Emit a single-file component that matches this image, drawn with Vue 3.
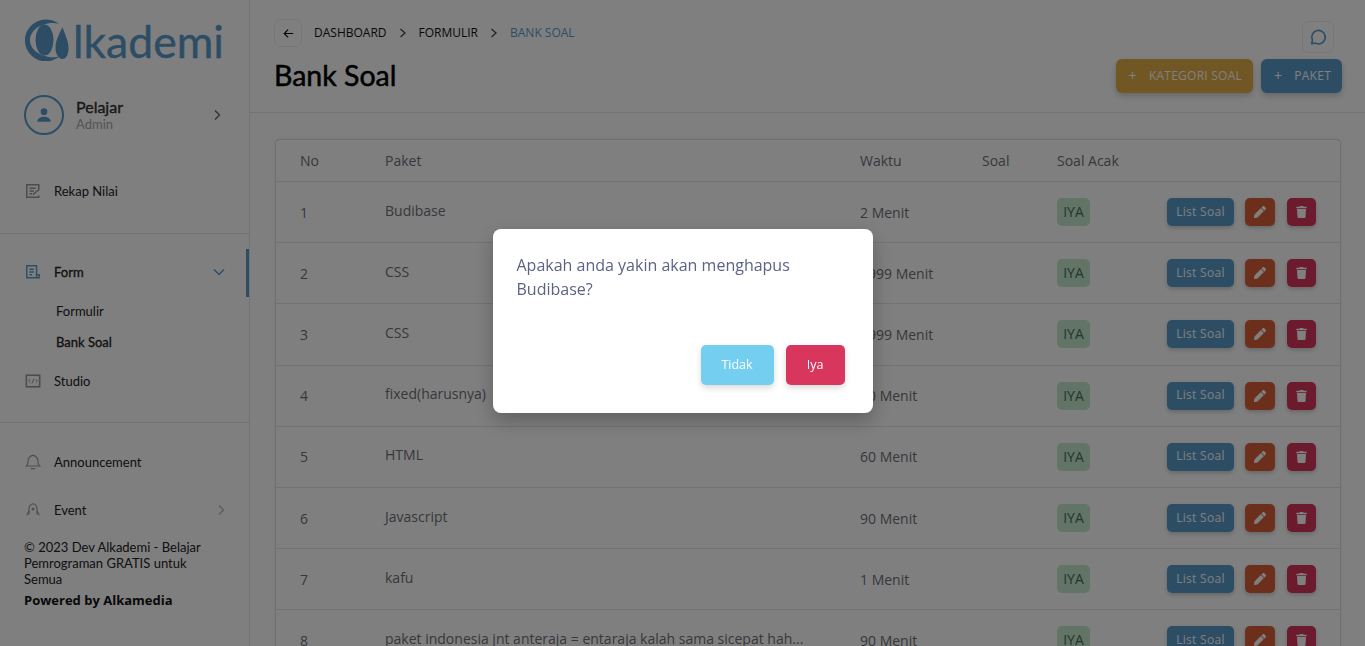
<script setup>
const rows = [
  { no: 1, paket: 'Budibase', waktu: '2 Menit' },
  { no: 2, paket: 'CSS', waktu: '9999 Menit' },
  { no: 3, paket: 'CSS', waktu: '9999 Menit' },
  { no: 4, paket: 'fixed(harusnya)', waktu: '60 Menit' },
  { no: 5, paket: 'HTML', waktu: '60 Menit' },
  { no: 6, paket: 'Javascript', waktu: '90 Menit' },
  { no: 7, paket: 'kafu', waktu: '1 Menit' },
  { no: 8, paket: 'paket indonesia jnt anteraja = entaraja kalah sama sicepat hah...', waktu: '90 Menit' }
]
</script>

<template>
  <div class="page">
    <aside class="sidebar">
      <div class="logo">
        <svg class="logo-mark" viewBox="0 0 46 42" width="46" height="42">
          <path d="M35 5A21 21 0 1 0 36 37C26 41 6 35 6 21C6 8 25 1 35 5Z" fill="#5a9bcb" />
          <ellipse cx="20.500" cy="21" rx="9" ry="15.500" fill="#5a9bcb" />
          <path d="M40 7C37 14 33 20 33 28C33 34 36 39 40 39C44 39 46 34 46 28C46 20 42 14 40 7Z" fill="#5a9bcb" transform="translate(-1.500 1)" />
        </svg>
        <span class="logo-text">lkademi</span>
      </div>

      <div class="user">
        <div class="avatar">
          <svg viewBox="0 0 24 24" width="20" height="20"><circle cx="12" cy="8" r="4" fill="#5a9bcb" /><path d="M4 20c0-4 4-6 8-6s8 2 8 6z" fill="#5a9bcb" /></svg>
        </div>
        <div class="user-info">
          <div class="user-name">Pelajar</div>
          <div class="user-role">Admin</div>
        </div>
        <svg class="chev" viewBox="0 0 12 12" width="12" height="12"><path d="M4 1.500 8.500 6 4 10.500" fill="none" stroke="#666" stroke-width="1.400" /></svg>
      </div>

      <div class="nav-item first">
        <svg viewBox="0 0 18 18" width="16" height="16" fill="none" stroke="#999" stroke-width="1.700"><path d="M15.500 7V2H2v14h13.500v-2" /><path d="M5 6h7M5 9h5M5 12h3" /><path d="m9 13 7-6" /></svg>
        <span>Rekap Nilai</span>
      </div>
      <div class="divider"></div>
      <div class="nav-item active">
        <svg viewBox="0 0 18 18" width="16" height="16" fill="none" stroke="#5a9bcb" stroke-width="1.600"><path d="M13 15V2H2v13.500h14V12h-3" /><path d="M5 6h5M5 9h5M5 12h3" /></svg>
        <span class="strong">Form</span>
        <svg class="chev down" viewBox="0 0 12 12" width="12" height="12"><path d="M1 3.500 6 8.500 11 3.500" fill="none" stroke="#5a9bcb" stroke-width="1.500" /></svg>
      </div>
      <div class="sub-item">Formulir</div>
      <div class="sub-item strong">Bank Soal</div>
      <div class="nav-item studio">
        <svg viewBox="0 0 18 18" width="16" height="16" fill="none" stroke="#999" stroke-width="1.800"><rect x="1.500" y="2.500" width="15" height="13" /><path d="M6 7 4 9l2 2M12 7l2 2-2 2M10 6.500l-2 5" stroke-width="1.100" /></svg>
        <span>Studio</span>
      </div>
      <div class="divider second"></div>
      <div class="nav-item">
        <svg viewBox="0 0 18 18" width="16" height="16" fill="none" stroke="#999" stroke-width="1.300"><path d="M1.500 13.500h15c-1.500-1-2-2-2-5.500s-2.500-6.500-5.500-6.500-5.500 3-5.500 6.500-.5 4.500-2 5.500Z" /><path d="M6.500 16.500h5" /></svg>
        <span>Announcement</span>
      </div>
      <div class="nav-item">
        <svg viewBox="0 0 18 18" width="16" height="16" fill="none" stroke="#999" stroke-width="1.300"><path d="M4.500 14V8c0-3 2-5.500 4.500-6 2.500.5 4.500 3 4.500 6v6" /><path d="M4.500 10 2 15M13.500 10l2.500 5" /><circle cx="9" cy="8" r="1" fill="#999" /></svg>
        <span>Event</span>
        <svg class="chev event-chev" viewBox="0 0 12 12" width="12" height="12"><path d="M4 1.500 8.500 6 4 10.500" fill="none" stroke="#bbb" stroke-width="1.400" /></svg>
      </div>
      <div class="footer">
        <p>© 2023 Dev Alkademi - Belajar Pemrograman GRATIS untuk Semua</p>
        <strong>Powered by Alkamedia</strong>
      </div>
    </aside>

    <main class="main">
      <header class="topbar">
        <div class="top-left">
          <div class="crumbs">
            <button class="back">
              <svg viewBox="0 0 14 14" width="11" height="11" fill="none" stroke="#111" stroke-width="1.500"><path d="M13 7H2M6.500 2 1.500 7l5 5" /></svg>
            </button>
            <span>DASHBOARD</span>
            <svg class="sep" viewBox="0 0 10 10" width="10" height="10"><path d="M2.500 1 7 5 2.500 9" fill="none" stroke="#444" stroke-width="1.300" /></svg>
            <span>FORMULIR</span>
            <svg class="sep" viewBox="0 0 10 10" width="10" height="10"><path d="M2.500 1 7 5 2.500 9" fill="none" stroke="#444" stroke-width="1.300" /></svg>
            <span class="current">BANK SOAL</span>
          </div>
          <h1>Bank Soal</h1>
        </div>
        <div class="top-right">
          <button class="chat">
            <svg viewBox="0 0 20 20" width="18" height="18" fill="none" stroke="#5a9bcb" stroke-width="1.800"><path d="M3 17.500 3.800 13.500A7.500 7.500 0 1 1 7 16.800Z" stroke-linejoin="round" /></svg>
          </button>
          <div class="top-buttons">
            <button class="btn yellow"><span class="plus">+</span>KATEGORI SOAL</button>
            <button class="btn blue"><span class="plus">+</span>PAKET</button>
          </div>
        </div>
      </header>

      <section class="card">
        <div class="row head">
          <div class="c-no">No</div>
          <div class="c-paket">Paket</div>
          <div class="c-waktu">Waktu</div>
          <div class="c-soal">Soal</div>
          <div class="c-acak">Soal Acak</div>
        </div>
        <div v-for="r in rows" :key="r.no" class="row">
          <div class="c-no">{{ r.no }}</div>
          <div class="c-paket lifted">{{ r.paket }}</div>
          <div class="c-waktu">{{ r.waktu }}</div>
          <div class="c-soal"></div>
          <div class="c-acak"><span class="badge">IYA</span></div>
          <div class="c-actions">
            <button class="act list">List Soal</button>
            <button class="act edit">
              <svg viewBox="0 0 512 512" width="12" height="12"><path fill="#fff" d="M497.900 142.100l-46.100 46.100c-4.700 4.700-12.300 4.700-17 0l-111-111c-4.700-4.700-4.700-12.300 0-17l46.100-46.100c18.700-18.700 49.100-18.700 67.900 0l60.100 60.100c18.800 18.700 18.800 49.100 0 67.900zM284.200 99.800L21.600 362.400.4 483.900c-2.900 16.400 11.400 30.600 27.800 27.800l121.500-21.300 262.600-262.600c4.700-4.700 4.700-12.300 0-17l-111-111c-4.800-4.700-12.400-4.700-17.100 0z" /></svg>
            </button>
            <button class="act trash">
              <svg viewBox="0 0 448 512" width="11" height="12"><path fill="#fff" d="M432 32H312l-9.400-18.700A24 24 0 0 0 281.100 0H166.800a23.720 23.720 0 0 0-21.400 13.300L136 32H16A16 16 0 0 0 0 48v32a16 16 0 0 0 16 16h416a16 16 0 0 0 16-16V48a16 16 0 0 0-16-16zM53.200 467a48 48 0 0 0 47.900 45h245.800a48 48 0 0 0 47.900-45L416 128H32z" /></svg>
            </button>
          </div>
        </div>
      </section>
    </main>

    <div class="overlay">
      <div class="modal">
        <p>Apakah anda yakin akan menghapus Budibase?</p>
        <div class="modal-buttons">
          <button class="m-btn no">Tidak</button>
          <button class="m-btn yes">Iya</button>
        </div>
      </div>
    </div>
  </div>
</template>

<style>
html, body { margin: 0; overflow: hidden; }
</style>

<style scoped>
.page {
  display: flex;
  width: 1365px;
  height: 646px;
  overflow: hidden;
  background: #fff;
  font-family: "Open Sans", sans-serif;
}
button { font-family: "Open Sans", sans-serif; border: none; cursor: pointer; }

/* sidebar */
.sidebar {
  width: 249px;
  flex: none;
  border-right: 1px solid #e4e4e4;
  font-family: Lato, sans-serif;
  font-size: 13px;
  color: #222;
}
.logo { display: flex; align-items: flex-start; height: 70px; padding: 19px 0 0 24px; box-sizing: border-box; }
.logo-mark { flex: none; }
.logo-text { font-size: 44.500px; line-height: 44px; color: #5a9bcb; margin-left: 3px; font-weight: 400; -webkit-text-stroke: .4px #5a9bcb; }
.user { display: flex; align-items: center; height: 40px; margin: 25px 0 0 24px; }
.avatar {
  width: 40px; height: 40px; box-sizing: border-box; border: 2px solid #5a9bcb; border-radius: 50%;
  display: flex; align-items: center; justify-content: center;
}
.user-info { margin-left: 12px; }
.user-name { font-size: 16px; line-height: 17px; color: #333; -webkit-text-stroke: .4px #333; }
.user-role { font-size: 13px; line-height: 15px; margin-top: 2px; color: #aaa; }
.user .chev { margin-left: auto; margin-right: 26px; }
.nav-item {
  display: flex; align-items: center; height: 48px; padding-left: 25px; position: relative; box-sizing: border-box;
}
.nav-item.first { margin-top: 32px; }
.nav-item.studio { margin-top: -1px; }
.nav-item span { margin-left: 13px; }
.nav-item .chev { margin-left: auto; margin-right: 24px; }
.nav-item .event-chev { margin-right: 22px; }
.nav-item.active::after {
  content: ""; position: absolute; right: 0; top: 1px; width: 3px; height: 48px; background: #5a9bcb;
}
.strong { -webkit-text-stroke: .3px #222; }
.sub-item { height: 31px; line-height: 31px; padding-left: 56px; }
.divider { height: 1px; background: #e4e4e4; margin: 18px 0 14px; }
.divider.second { margin: 17px 0 15px; }
.footer { padding: 5px 24px 0; line-height: 16px; }
.footer p { margin: 0; }
.footer strong { display: block; margin-top: 4px; font-family: "Open Sans", sans-serif; font-size: 13px; color: #111; line-height: 18px; }

/* main */
.main { flex: 1; min-width: 0; }
.topbar {
  height: 113px; box-sizing: border-box; border-bottom: 1px solid #e8e8e8;
  display: flex; justify-content: space-between; padding: 19px 23px 0 24px;
}
.crumbs { display: flex; align-items: center; font-size: 12px; color: #111; height: 28px; }
.crumbs span { margin-top: -2px; }
.crumbs .current { color: #5a9bcb; }
.sep { margin: 0 11px; }
.back {
  width: 28px; height: 28px; padding: 0; margin-right: 12px; border: 1px solid #eee; border-radius: 6px; background: #fff;
  display: flex; align-items: center; justify-content: center;
}
h1 { margin: 11px 0 0; font-family: Lato, sans-serif; font-size: 28.500px; line-height: 34px; font-weight: 400; color: #000; -webkit-text-stroke: .5px #000; }
.top-right { display: flex; flex-direction: column; align-items: flex-end; }
.chat {
  width: 32px; height: 32px; padding: 0; margin: 2px 8px 0 0; border: 1px solid #eee; border-radius: 6px; background: #fff;
  display: flex; align-items: center; justify-content: center;
}
.top-buttons { display: flex; gap: 8px; margin-top: 6px; }
.btn {
  height: 34px; border-radius: 6px; padding: 0 11px 2px 13px; color: #fff; font-size: 12px; letter-spacing: .25px;
  box-shadow: 0 3px 6px rgba(0, 0, 0, .2); display: flex; align-items: center;
}
.plus { margin-right: 12px; font-size: 14px; }
.yellow { background: #e2ae47; }
.blue { background: #5a9bcb; }

.card {
  margin: 26px 24px 0 25px; border: 1px solid #e0e0e0; border-radius: 4px; box-shadow: 0 0 3px rgba(0, 0, 0, .08);
  color: #6f6f78; font-size: 14px;
}
.row { display: flex; align-items: center; height: 61.200px; border-top: 1px solid #e6e6e6; box-sizing: border-box; }
.row.head { height: 41px; border-top: none; }
.c-no { width: 109px; padding-left: 24px; box-sizing: border-box; flex: none; }
.c-paket { width: 475px; flex: none; }
.lifted { margin-bottom: 4px; }
.c-waktu { width: 122px; flex: none; }
.c-soal { width: 75px; flex: none; }
.c-acak { width: 110px; flex: none; }
.c-actions { display: flex; align-items: center; }
.badge {
  display: inline-block; width: 33px; height: 28px; line-height: 28px; text-align: center; border-radius: 5px;
  background: #c4e8cc; color: #4d6b52;
}
.act {
  height: 28px; border-radius: 5px; color: #fff; padding: 0; display: flex; align-items: center; justify-content: center;
  box-shadow: 0 2px 4px rgba(0, 0, 0, .2);
}
.list { width: 67px; padding-bottom: 2px; background: #5a9bcb; font-size: 12px; letter-spacing: .3px; margin-right: 11px; }
.edit { width: 30px; background: #d95f38; margin-right: 12px; }
.trash { width: 29px; background: #d9365e; }

/* modal */
.overlay {
  position: fixed; inset: 0; background: rgba(0, 0, 0, .5); display: flex; align-items: flex-start; justify-content: center;
}
.modal {
  width: 380px; height: 184px; margin-top: 229px; box-sizing: border-box; padding: 24px 28px 28px 24px;
  background: #fff; border-radius: 8px; box-shadow: 0 8px 20px rgba(0, 0, 0, .25);
  display: flex; flex-direction: column; justify-content: space-between;
}
.modal p { margin: 0; font-size: 16px; line-height: 24px; color: #5c6384; }
.modal-buttons { display: flex; justify-content: flex-end; gap: 12px; }
.m-btn {
  height: 40px; padding: 0 0 2px; border-radius: 5px; color: #fff; font-size: 12.500px; box-shadow: 0 3px 6px rgba(0, 0, 0, .15);
}
.no { width: 73px; background: #73cef0; }
.yes { width: 59px; background: #d9365e; }
</style>
